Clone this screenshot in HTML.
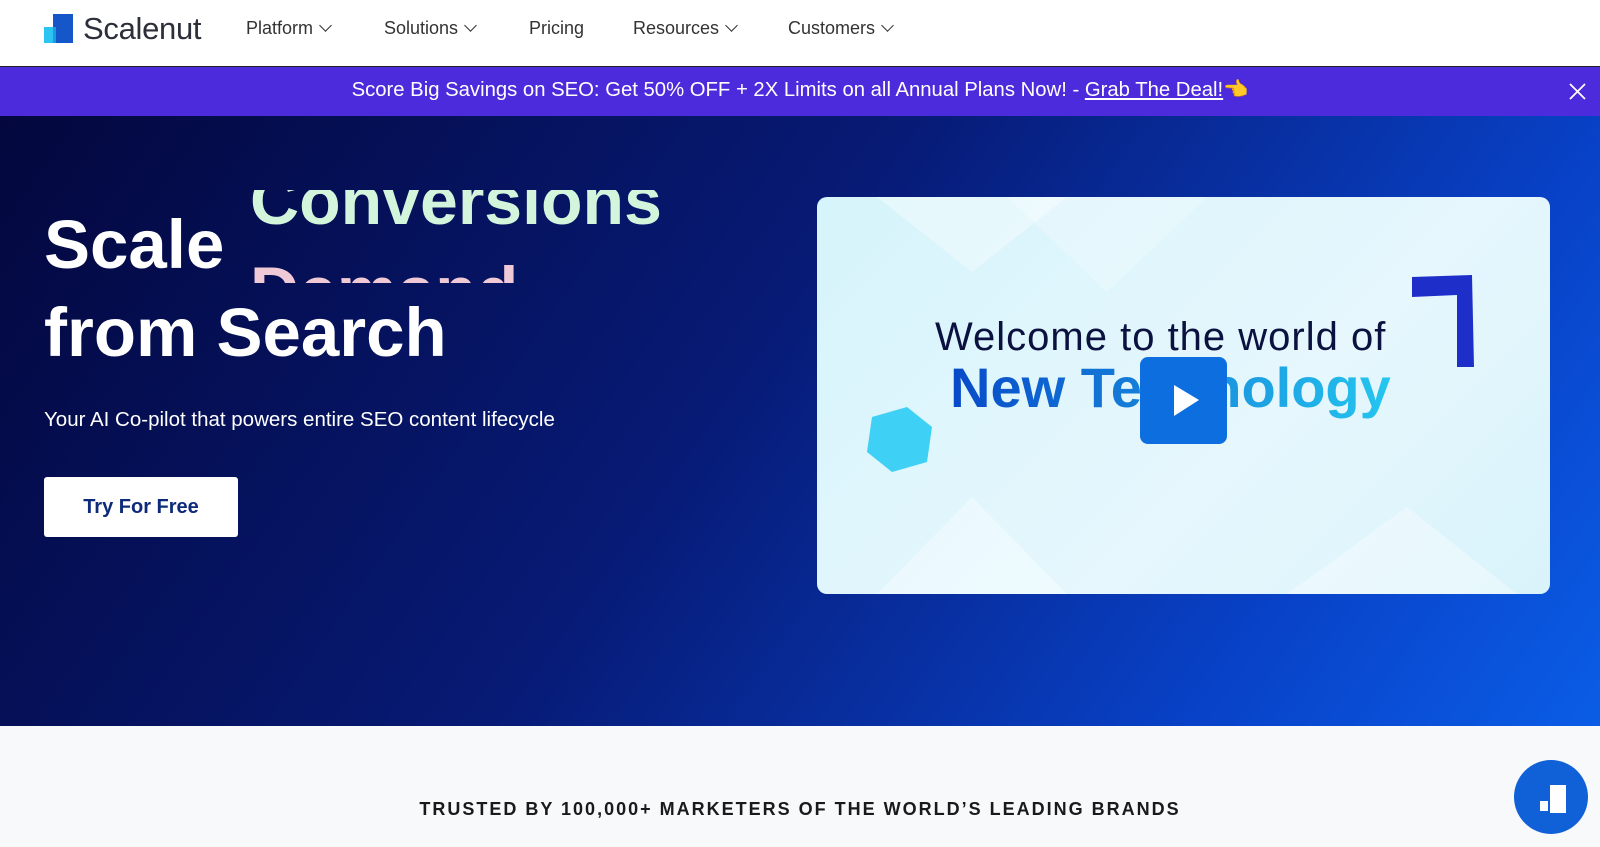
<!DOCTYPE html>
<html><head><meta charset="utf-8"><style>
*{margin:0;padding:0;box-sizing:border-box}
body{width:1600px;height:847px;overflow:hidden;font-family:"Liberation Sans",sans-serif;background:#f8f9fa;position:relative}
.nav{position:absolute;top:0;left:0;width:1600px;height:67px;background:#fff;border-bottom:1px solid #222}
.nav .item{position:absolute;top:18px;font-size:18px;color:#333}
.chev{display:inline-block;width:9px;height:9px;border-right:1.5px solid #333;border-bottom:1.5px solid #333;transform:rotate(45deg);margin-left:8px;position:relative;top:-4px}
.banner{position:absolute;top:67px;left:0;width:1600px;height:49px;background:#4b2bdb;color:#fff;font-size:20.3px;text-align:center;line-height:47px}
.hero{position:absolute;top:116px;left:0;width:1600px;height:610px;background:linear-gradient(125deg,#03073d 0%,#071a75 45%,#0842c8 80%,#0b5de6 100%)}
h1{position:absolute;color:#fff;font-size:69px;font-weight:bold;left:44px}
.clip{position:absolute;left:250px;top:190px;width:450px;height:93px;overflow:hidden}
.clip div{position:absolute;left:0;font-size:68px;font-weight:bold}
.card{position:absolute;left:817px;top:197px;width:733px;height:397px;border-radius:10px;background:linear-gradient(135deg,#d6f4fb,#e6f7fd 60%,#d9f3fb);overflow:hidden}
</style></head><body>
<div class="nav">
<svg style="position:absolute;left:44px;top:14px" width="29" height="29" viewBox="0 0 29 29"><rect x="9" y="0" width="20" height="29" fill="#1556c9"/><rect x="0" y="13" width="12" height="16" fill="#2cc4f0"/><rect x="9" y="13" width="3" height="16" fill="#1b9be0"/></svg>
<div style="position:absolute;left:83px;top:11px;font-size:31px;color:#2b2f3a;letter-spacing:-0.3px">Scalenut</div>
<div class="item" style="left:246px">Platform<span class="chev"></span></div>
<div class="item" style="left:384px">Solutions<span class="chev"></span></div>
<div class="item" style="left:529px">Pricing</div>
<div class="item" style="left:633px">Resources<span class="chev"></span></div>
<div class="item" style="left:788px">Customers<span class="chev"></span></div>
</div>
<div class="banner">Score Big Savings on SEO: Get 50% OFF + 2X Limits on all Annual Plans Now! - <u>Grab The Deal!</u>👈
<svg style="position:absolute;right:14px;top:16px" width="17" height="17"><path d="M1 1L16 16M16 1L1 16" stroke="#fff" stroke-width="1.8"/></svg></div>
<div class="hero"></div>
<div class="clip"><div style="top:-28px;color:#d3f5dc">Conversions</div><div style="top:62px;color:#f0c9d6">Demand</div></div>
<h1 style="top:205px">Scale</h1>
<h1 style="top:293px">from Search</h1>
<div style="position:absolute;left:44px;top:408px;color:#fff;font-size:20.5px">Your AI Co-pilot that powers entire SEO content lifecycle</div>
<div style="position:absolute;left:44px;top:477px;width:194px;height:60px;background:#fff;border-radius:3px;color:#0d2b7a;font-size:20px;font-weight:bold;text-align:center;line-height:60px">Try For Free</div>
<div class="card">
<svg width="733" height="397" style="position:absolute;left:0;top:0"><polygon points="60,0 250,0 155,75" fill="#fff" opacity=".35"/><polygon points="190,0 390,0 290,95" fill="#fff" opacity=".25"/><polygon points="60,397 250,397 155,300" fill="#fff" opacity=".35"/><polygon points="470,397 700,397 590,310" fill="#fff" opacity=".35"/>
<polygon points="595,80 655,78 657,170 640,170 640,98 595,100" fill="#1d2fc8"/>
<polygon points="55,220 90,210 115,230 110,265 75,275 50,255" fill="#3ed0f5"/></svg>
<div style="position:absolute;left:118px;top:118px;font-size:40px;color:#0b1240;letter-spacing:1px">Welcome to the world of</div>
<div style="position:absolute;left:133px;top:158px;font-size:56px;font-weight:bold;background:linear-gradient(90deg,#0849c8,#25c6ef);-webkit-background-clip:text;color:transparent">New Technology</div>
<div style="position:absolute;left:323px;top:160px;width:87px;height:87px;border-radius:8px;background:#0d6ee0"><svg width="87" height="87"><polygon points="34,28 34,59 59,43" fill="#fff"/></svg></div>
</div>
<div style="position:absolute;top:726px;left:0;width:1600px;height:121px;background:#f8f9fa"></div>
<div style="position:absolute;top:799px;left:0;width:1600px;text-align:center;font-size:18px;font-weight:bold;letter-spacing:2px;color:#1a1a1a">TRUSTED BY 100,000+ MARKETERS OF THE WORLD’S LEADING BRANDS</div>
<div style="position:absolute;left:1514px;top:760px;width:74px;height:74px;border-radius:50%;background:#1060d8"><svg width="74" height="74"><rect x="24" y="25" width="28" height="28" fill="#fff"/><rect x="24" y="25" width="12" height="14" fill="#1060d8"/><rect x="24" y="39" width="12" height="14" fill="#1060d8"/><rect x="26" y="41" width="8" height="10" fill="#fff"/><rect x="36" y="25" width="16" height="28" fill="#fff"/></svg></div>
</body></html>
